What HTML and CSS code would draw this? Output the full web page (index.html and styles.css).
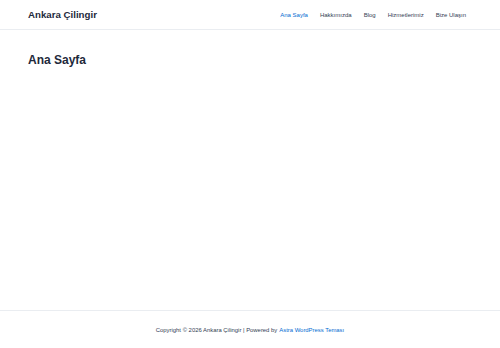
FILE: index.html
```html
<!DOCTYPE html>
<html lang="tr">
<head>
    <meta charset="utf-8">
    <title>Ankara Çilingir</title>
    <link rel="stylesheet" href="styles.css">
</head>
<body>
    <div class="page">
        <header class="site-header">
            <a class="site-title" href="#">Ankara Çilingir</a>
            <nav class="main-nav">
                <a href="#" class="current">Ana Sayfa</a>
                <a href="#">Hakkımızda</a>
                <a href="#">Blog</a>
                <a href="#">Hizmetlerimiz</a>
                <a href="#">Bize Ulaşın</a>
            </nav>
        </header>

        <main class="content">
            <h1 class="entry-title">Ana Sayfa</h1>
        </main>

        <footer class="site-footer">
            Copyright © 2026 Ankara Çilingir | Powered by <a href="#">Astra WordPress Teması</a>
        </footer>
    </div>
</body>
</html>
```

FILE: styles.css
```css
html, body {
    margin: 0;
    height: 100%;
}
body {
    font-family: "Liberation Sans", Arial, sans-serif;
    color: #334155;
    background: #fff;
}
a {
    text-decoration: none;
}
.page {
    display: flex;
    flex-direction: column;
    min-height: 100%;
}
.site-header {
    display: flex;
    align-items: center;
    justify-content: space-between;
    height: 29px;
    padding: 0 34px 0 28px;
    border-bottom: 1px solid #eaedf1;
}
.site-title {
    font-size: 9.7px;
    font-weight: bold;
    color: #1e293b;
}
.main-nav {
    display: flex;
    gap: 12px;
}
.main-nav a {
    font-size: 6px;
    color: #334155;
}
.main-nav a.current {
    color: #046bd2;
}
.content {
    flex: 1;
    padding: 23px 28px;
}
.entry-title {
    margin: 0;
    font-size: 12px;
    font-weight: bold;
    color: #1e293b;
}
.site-footer {
    height: 37px;
    display: flex;
    align-items: center;
    justify-content: center;
    border-top: 1px solid #eaedf1;
    font-size: 5.9px;
    color: #334155;
}
.site-footer a {
    color: #046bd2;
    margin-left: 2px;
}
```
